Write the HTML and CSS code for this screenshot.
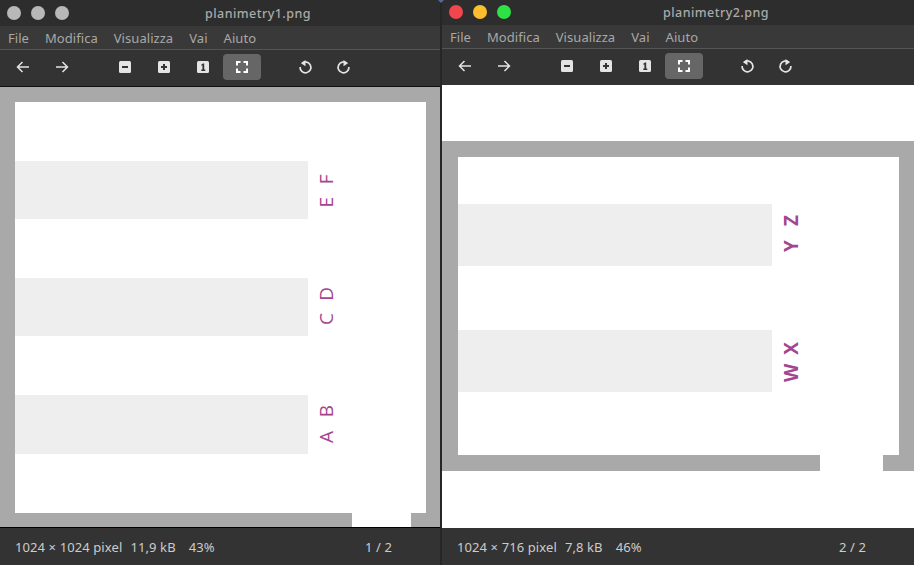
FILE: index.html
```html
<!DOCTYPE html>
<html lang="en">
<head>
    <meta charset="UTF-8">
    <title>planimetry</title>
    <link rel="stylesheet" href="styles.css">
</head>
<body>
<svg width="0" height="0" class="defs">
    <symbol id="i-back" viewBox="0 0 16 16"><path d="M14 8H3M7.500 3 2.500 8l5 5" fill="none" stroke="currentColor" stroke-width="1.500"/></symbol>
    <symbol id="i-next" viewBox="0 0 16 16"><path d="M2 8h11M8.500 3l5 5-5 5" fill="none" stroke="currentColor" stroke-width="1.500"/></symbol>
    <symbol id="i-out" viewBox="0 0 16 16"><rect x="2" y="2" width="12" height="12" rx="1.500" fill="currentColor"/><rect x="5" y="7" width="6" height="2" fill="#333"/></symbol>
    <symbol id="i-in" viewBox="0 0 16 16"><rect x="2" y="2" width="12" height="12" rx="1.500" fill="currentColor"/><path d="M5 7h2V5h2v2h2v2H9v2H7V9H5z" fill="#333"/></symbol>
    <symbol id="i-one" viewBox="0 0 16 16"><rect x="2" y="2" width="12" height="12" rx="1.500" fill="currentColor"/><path d="M6.500 5.500 8 4.500h1.200v6h1.100V12h-4v-1.500h1.100V6.300l-1.100.6z" fill="#333"/></symbol>
    <symbol id="i-fit" viewBox="0 0 16 16"><path d="M3 6.500V3h3.500M9.500 3H13v3.500M13 9.500V13H9.500M6.500 13H3V9.500" fill="none" stroke="currentColor" stroke-width="2"/></symbol>
    <symbol id="i-left" viewBox="0 0 16 16"><path d="M5 4.300A5.400 5.400 0 1 1 3.100 8" fill="none" stroke="currentColor" stroke-width="1.700"/><path d="M8.500 1 4 4.300l4.500 2.900z" fill="currentColor"/></symbol>
    <symbol id="i-right" viewBox="0 0 16 16"><path d="M11 4.300A5.400 5.400 0 1 0 12.900 8" fill="none" stroke="currentColor" stroke-width="1.700"/><path d="M7.500 1 12 4.300 7.500 7.200z" fill="currentColor"/></symbol>
</svg>

<div class="desk">
    <section class="win win-one">
        <header class="titlebar">
            <div class="lights">
                <span class="light"></span>
                <span class="light"></span>
                <span class="light"></span>
            </div>
            <div class="title">planimetry1.png</div>
        </header>
        <nav class="menu">
            <span>File</span><span>Modifica</span><span>Visualizza</span><span>Vai</span><span>Aiuto</span>
        </nav>
        <div class="toolbar">
            <div class="group">
                <button><svg><use href="#i-back"/></svg></button>
                <button><svg><use href="#i-next"/></svg></button>
            </div>
            <div class="group">
                <button><svg><use href="#i-out"/></svg></button>
                <button><svg><use href="#i-in"/></svg></button>
                <button><svg><use href="#i-one"/></svg></button>
                <button class="on"><svg><use href="#i-fit"/></svg></button>
            </div>
            <div class="group">
                <button><svg><use href="#i-left"/></svg></button>
                <button><svg><use href="#i-right"/></svg></button>
            </div>
        </div>
        <main class="canvas">
            <svg class="plan" width="440" height="440" viewBox="0 87 440 440">
                <rect class="wall" x="0" y="87" width="440" height="440"/>
                <rect class="floor" x="15" y="102" width="411" height="411"/>
                <rect class="floor" x="352" y="513" width="59" height="14"/>
                <rect class="room" x="15" y="161" width="293" height="58"/>
                <rect class="room" x="15" y="278" width="293" height="58"/>
                <rect class="room" x="15" y="395" width="293" height="59"/>
                <text class="label" textLength="33" transform="translate(332.500 191) rotate(-90)">E F</text>
                <text class="label" textLength="38" transform="translate(332.500 306) rotate(-90)">C D</text>
                <text class="label" textLength="38" transform="translate(332.500 424) rotate(-90)">A B</text>
            </svg>
        </main>
        <footer class="status">
            <span class="info">1024 × 1024 pixel</span>
            <span class="info">11,9 kB</span>
            <span class="zoom">43%</span>
            <span class="page">1 / 2</span>
        </footer>
    </section>

    <section class="win win-two">
        <header class="titlebar">
            <div class="lights">
                <span class="light red"></span>
                <span class="light yellow"></span>
                <span class="light green"></span>
            </div>
            <div class="title">planimetry2.png</div>
        </header>
        <nav class="menu">
            <span>File</span><span>Modifica</span><span>Visualizza</span><span>Vai</span><span>Aiuto</span>
        </nav>
        <div class="toolbar">
            <div class="group">
                <button><svg><use href="#i-back"/></svg></button>
                <button><svg><use href="#i-next"/></svg></button>
            </div>
            <div class="group">
                <button><svg><use href="#i-out"/></svg></button>
                <button><svg><use href="#i-in"/></svg></button>
                <button><svg><use href="#i-one"/></svg></button>
                <button class="on"><svg><use href="#i-fit"/></svg></button>
            </div>
            <div class="group">
                <button><svg><use href="#i-left"/></svg></button>
                <button><svg><use href="#i-right"/></svg></button>
            </div>
        </div>
        <main class="canvas">
            <svg class="plan" width="472" height="443" viewBox="442 85 472 443">
                <rect class="floor" x="442" y="85" width="472" height="443"/>
                <rect class="wall" x="442" y="141" width="472" height="330"/>
                <rect class="floor" x="458" y="157" width="441" height="298"/>
                <rect class="floor" x="820" y="455" width="63" height="16"/>
                <rect class="room" x="458" y="204" width="314" height="62"/>
                <rect class="room" x="458" y="330" width="314" height="62"/>
                <text class="label bold" textLength="37" transform="translate(798 233.500) rotate(-90)">Y Z</text>
                <text class="label bold" textLength="40" transform="translate(798 362) rotate(-90)">W X</text>
            </svg>
        </main>
        <footer class="status">
            <span class="info">1024 × 716 pixel</span>
            <span class="info">7,8 kB</span>
            <span class="zoom">46%</span>
            <span class="page">2 / 2</span>
        </footer>
    </section>
</div>
<span class="corner"></span>
</body>
</html>
```

FILE: styles.css
```css
* {
    box-sizing: border-box;
}

body {
    margin: 0;
    background: #262626;
    font-family: "Noto Sans", sans-serif;
    overflow: hidden;
}

.defs {
    position: absolute;
}

.desk {
    display: flex;
    gap: 2px;
    height: 565px;
}

.win {
    display: flex;
    flex-direction: column;
    height: 565px;
}

.win-one {
    width: 440px;
}

.win-two {
    width: 472px;
}

.titlebar {
    position: relative;
    display: flex;
    align-items: center;
    justify-content: center;
    flex: none;
    height: 26px;
    padding-left: 76px;
    background: #2d2d2d;
}

.win-two .titlebar {
    height: 25px;
}

.lights {
    position: absolute;
    left: 7px;
    top: 6px;
    display: flex;
    gap: 10px;
}

.win-two .lights {
    top: 5px;
}

.light {
    width: 14px;
    height: 14px;
    border-radius: 50%;
    background: #b8b8b8;
}

.red {
    background: #f2464f;
}

.yellow {
    background: #fdbf2d;
}

.green {
    background: #2ee246;
}

.title {
    color: #aaa;
    font-size: 12.500px;
    font-weight: 500;
    letter-spacing: 0.45px;
}

.menu {
    display: flex;
    align-items: center;
    flex: none;
    gap: 16px;
    height: 24px;
    padding-left: 8px;
    background: #393939;
    border-bottom: 1px solid #555;
    color: #a8a8a8;
    font-size: 13px;
    letter-spacing: 0.05px;
}

.toolbar {
    display: flex;
    align-items: center;
    flex: none;
    gap: 25px;
    height: 36px;
    padding: 0 0 2px 4px;
    background: #333;
}

.group {
    display: flex;
    gap: 1px;
}

.toolbar button {
    display: flex;
    align-items: center;
    justify-content: center;
    width: 38px;
    height: 26px;
    padding: 0;
    border: 0;
    border-radius: 4px;
    background: transparent;
    color: #e4e4e4;
}

.toolbar button.on {
    background: #666;
    color: #fff;
}

.toolbar svg {
    width: 16px;
    height: 16px;
}

.canvas {
    flex: 1;
    min-height: 0;
}

.win-one .canvas {
    border-top: 1px solid #111;
}

.plan {
    display: block;
}

.wall {
    fill: #a9a9a9;
}

.floor {
    fill: #fff;
}

.room {
    fill: #eee;
}

.label {
    fill: #a3458f;
    font-family: "Open Sans", sans-serif;
    font-size: 19px;
    text-anchor: middle;
}

.bold {
    font-weight: 700;
}

.status {
    display: flex;
    align-items: center;
    flex: none;
    gap: 8px;
    height: 37px;
    padding-left: 15px;
    background: #333;
    color: #ccc;
    font-size: 13px;
    letter-spacing: 0.1px;
}

.win-one .status {
    height: 38px;
    border-top: 1px solid #000;
}

.zoom {
    margin-left: 5px;
}

.page {
    margin-left: auto;
    margin-right: 48px;
}

.corner {
    position: absolute;
    left: 438px;
    top: 0;
    border: 3px solid transparent;
    border-top-color: #56689c;
}
```
